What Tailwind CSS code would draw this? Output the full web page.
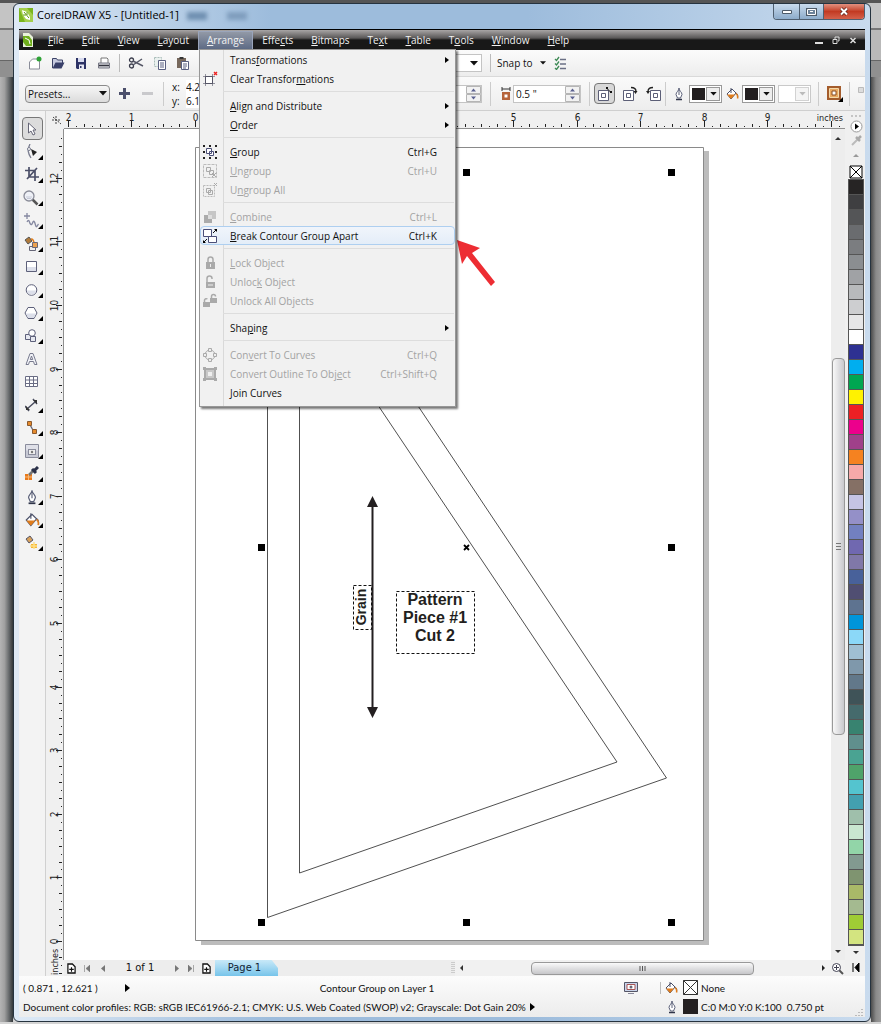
<!DOCTYPE html>
<html lang="en">
<head>
    <meta charset="utf-8">
    <title>CorelDRAW X5 - [Untitled-1]</title>
    <meta name="viewport" content="width=device-width, initial-scale=1">
    <script src="https://cdn.jsdelivr.net/npm/@tailwindcss/browser@4"></script>
</head>
<body class="min-h-screen bg-[#8c8c8c] font-['Open_Sans','Noto_Sans',sans-serif] text-[10px] leading-4 text-[#111]">

<!-- shared icons -->
<svg class="hidden">
    <symbol id="i-bucket" viewBox="0 0 14 14"><path d="M2 7l5-5 4 4-5 6z" fill="#fff" stroke="#4a5068"/><path d="M2 7.500h8l-4 4.500z" fill="#e07d1c"/><path d="M6 1v5M11 6c2 1 2 3 1.500 5" fill="none" stroke="#4a5068"/><path d="M11 6.500c1.500 1 2 2.500 1.500 5" fill="none" stroke="#e07d1c" stroke-width="1.500"/></symbol>
    <symbol id="i-pen" viewBox="0 0 14 14"><path d="M7 1c0 3-3 4-3 6.500L5.500 11h3L10 7.500C10 5 7 4 7 1z" fill="#fff" stroke="#5a6078"/><path d="M7 3v5" stroke="#5a6078"/><path d="M4 12.500h6" stroke="#30354a" stroke-width="1.500"/></symbol>
    <symbol id="i-down" viewBox="0 0 8 5"><path d="M0 0h8L4 4.500z" fill="currentColor"/></symbol>
    <symbol id="i-addpage" viewBox="0 0 10 12"><path d="M1 1h5l3 3v7H1z" fill="#fff" stroke="#111" stroke-width="1.400"/><path d="M5 4.500v5M2.500 7h5" stroke="#111" stroke-width="1.300"/></symbol>
    <symbol id="i-logo" viewBox="0 0 14 14"><path d="M0 0h14v14H0z" fill="#7ab51d"/><path d="M0 0h8l6 7v7H6z" fill="#a4cf4c"/><path d="M3 2l5 2 3 5v3l-4-1-3-4z" fill="#fff"/><path d="M5 4l5 6M8 4v3M4 7h3" stroke="#5f9a10"/></symbol>
    <symbol id="i-fly" viewBox="0 0 5 5"><path d="M5 0v5H0z" fill="#000"/></symbol>
</svg>

<div class="flex min-h-screen bg-[linear-gradient(#555_0_3px,#c4c4c4_3px_28px,#777_28px_30px,#b9b9b9_30px_60px,#666_60px_61px,#909090_61px_77px,transparent_77px_1006px,#d4d4d4_1006px)] pt-[3px] pb-[3px]">
    <div class="w-[13px] shrink-0 self-stretch mt-[74px] bg-[linear-gradient(to_right,#b4b4b4,#a0a0a0_35%,#5c6062_75%,#33383b)]"></div>

    <div class="flex min-w-0 flex-1 flex-col rounded-md border border-[#26333f] bg-[linear-gradient(to_right,#dfeaf6,#9dbcdc_30%,#9dbcdc_60%,#c9dbee)] px-[5px] pb-1">

        <!-- title bar -->
        <header class="flex h-[25px] shrink-0 items-start">
            <svg class="mt-1 mr-1 size-[14px]"><use href="#i-logo"/></svg>
            <h1 class="mt-[3px] text-[11px] text-black">CorelDRAW X5 - [Untitled-1]</h1>
            <div class="ml-2 mt-2 flex gap-5 text-[#5f7d9d] blur-[2px]">
                <span class="h-2 w-5 bg-[#6f8fb0]"></span>
                <span class="h-2 w-5 bg-[#7f9dbd]"></span>
            </div>
            <div class="ml-auto flex h-4 overflow-hidden rounded-b border border-t-0 border-[#4f5f70]">
                <button aria-label="Minimize" class="flex w-[26px] items-center justify-center border-r border-[#4f5f70] bg-linear-to-b from-[#c9dbed] to-[#8daccb]"><svg class="h-1 w-[10px]"><path d="M.5.5h9v3h-9z" fill="#fff" stroke="#4d5a68"/></svg></button>
                <button aria-label="Maximize" class="flex w-6 items-center justify-center border-r border-[#4f5f70] bg-linear-to-b from-[#c9dbed] to-[#8daccb]"><svg class="h-2 w-[11px]"><path d="M1 1h9v6H1z" fill="#6d8299" stroke="#4d5a68" stroke-width="2"/><path d="M1.500 1.500h8v5h-8zM4 3.500h3" fill="none" stroke="#fff"/></svg></button>
                <button aria-label="Close" class="flex w-10 items-center justify-center bg-linear-to-b from-[#e0907f] via-[#c23a22] to-[#d4604a]"><svg class="h-[9px] w-[10px]"><path d="M2 1.500l6 6M8 1.500l-6 6" stroke="#5a2018" stroke-width="3.500"/><path d="M2 1.500l6 6M8 1.500l-6 6" stroke="#fff" stroke-width="2"/></svg></button>
            </div>
        </header>

        <div class="relative flex flex-1 flex-col border-t border-black bg-[#f0f0f0]">

            <!-- menu bar -->
            <nav class="flex h-5 shrink-0 items-center bg-[linear-gradient(#a8a5a5,#5a5858_40%,#181818_50%,#181818)] text-[#f2f2f2]">
                <svg class="ml-1 mr-[6px] h-[14px] w-[10px] shrink-0" viewBox="0 0 10 14"><path d="M0 0h6l4 4v10H0z" fill="#e9f2da"/><path d="M0 3h6l3 4v6H3L0 9z" fill="#6fae1c"/><path d="M2 5l4 2 1 4" stroke="#fff" fill="none"/></svg>
                <button class="px-[9px]"><u>F</u>ile</button>
                <button class="px-[9px]"><u>E</u>dit</button>
                <button class="px-[9px]"><u>V</u>iew</button>
                <button class="px-[9px]"><u>L</u>ayout</button>
                <button class="h-[19px] border border-[#9aa5bb] bg-linear-to-b from-[#9299a6] to-[#5e6b85] px-2"><u>A</u>rrange</button>
                <button class="px-[9px]">Effe<u>c</u>ts</button>
                <button class="px-[9px]"><u>B</u>itmaps</button>
                <button class="px-[9px]">Te<u>x</u>t</button>
                <button class="px-[9px]"><u>T</u>able</button>
                <button class="px-[9px]">T<u>o</u>ols</button>
                <button class="px-[9px]"><u>W</u>indow</button>
                <button class="px-[9px]"><u>H</u>elp</button>
                <div class="ml-auto mr-2 flex items-center gap-[9px]">
                    <button aria-label="Minimize document"><svg class="h-2 w-2"><path d="M0 7h8" stroke="#ddd" stroke-width="2"/></svg></button>
                    <button aria-label="Restore document"><svg class="h-2 w-2"><path d="M1 3.500h4v4H1zM3 3V1h4v4H6" fill="none" stroke="#ddd"/></svg></button>
                    <button aria-label="Close document"><svg class="h-2 w-2"><path d="M1.500 2l5 5M6.500 2l-5 5" stroke="#ddd" stroke-width="1.500"/></svg></button>
                </div>
            </nav>

            <!-- standard toolbar -->
            <div class="flex h-[27px] shrink-0 items-center border-b border-[#d9d9d9] bg-linear-to-b from-[#fbfbfb] to-[#ededed]">
                <div class="flex items-center gap-[9px] pl-[9px]">
                    <button aria-label="New"><svg class="size-[14px]"><path d="M1.500 13V6l3-3h7v10z" fill="#fff" stroke="#8a8d99"/><circle cx="11" cy="3" r="2.500" fill="#2fa336"/></svg></button>
                    <button aria-label="Open"><svg class="size-[14px]"><path d="M1.500 12V2.500h4l1 1.500h5v3" fill="#c7cbe0" stroke="#3b4266"/><path d="M1.500 12.500l3-6h9l-3 6z" fill="#39406a"/></svg></button>
                    <button aria-label="Save"><svg class="size-[14px]"><path d="M2 2h10v11H3l-1-1z" fill="#2d3366"/><path d="M4 2h6v4H4z" fill="#d9dcf0"/><path d="M5 8.500h5V13H5z" fill="#e8e9f4"/><path d="M6 10h1.500v2H6z" fill="#2d3366"/></svg></button>
                    <button aria-label="Print"><svg class="size-[14px]"><path d="M4 7V2h6l1 1v4" fill="#fff" stroke="#777"/><path d="M1.500 7h11v5h-11z" fill="#d6d6dc" stroke="#777885"/><path d="M2 9.500h10" stroke="#33343f" stroke-width="1.500"/></svg></button>
                </div>
                <i class="mx-2 h-[18px] border-l border-[#bbb]"></i>
                <div class="flex items-center gap-[9px]">
                    <button aria-label="Cut"><svg class="h-[14px] w-4"><circle cx="3.500" cy="4" r="2" fill="none" stroke="#3b3d4c" stroke-width="1.300"/><circle cx="3.500" cy="10" r="2" fill="none" stroke="#3b3d4c" stroke-width="1.300"/><path d="M5 5l10 5M5 9l9-6" stroke="#555766" stroke-width="1.500"/></svg></button>
                    <button aria-label="Copy"><svg class="size-[14px]"><path d="M1.500 1.500h7v9h-7z" fill="#eaf1ef" stroke="#a9bdb9" stroke-dasharray="2 1"/><path d="M5.500 4.500h7v9h-7z" fill="#fff" stroke="#5a6080"/><path d="M7 7h4M7 9h4M7 11h4" stroke="#5a6080"/></svg></button>
                    <button aria-label="Paste"><svg class="size-[14px]"><path d="M1 2h9v10H1z" fill="#77685c"/><path d="M3.500 1h4v2h-4z" fill="#333"/><path d="M5.500 5.500h7v8h-7z" fill="#fff" stroke="#5a6080"/><path d="M7 8h4M7 10h4M7 12h3" stroke="#5a6080"/></svg></button>
                </div>
                <select aria-label="Zoom levels" class="ml-[210px] h-[18px] w-[82px] shrink-0 appearance-none border border-[#c4c4c4] bg-white"><option></option></select>
                <svg class="-ml-3 h-[5px] w-2"><use href="#i-down"/></svg>
                <i class="ml-3 mr-[6px] h-[18px] border-l border-[#bbb]"></i>
                <button class="flex items-center gap-2 whitespace-nowrap">Snap to <svg class="h-[4px] w-[6px]"><use href="#i-down"/></svg></button>
                <button aria-label="Options" class="ml-2"><svg class="size-[14px]"><path d="M1 3l1.500 1.500L5 1M1 7.500L2.500 9 5 5.500M1 12l1.500 1.500L5 10" fill="none" stroke="#3d8a55" stroke-width="1.300"/><path d="M6 3.500h6M6 8h6M6 12.500h6" stroke="#6b7085" stroke-width="1.500"/></svg></button>
            </div>

            <!-- property bar -->
            <div class="flex h-[34px] shrink-0 items-center border-b border-[#cfcfcf] bg-linear-to-b from-[#fafafa] to-[#ededed] pl-[6px]">
                <select aria-label="Presets" class="h-[18px] w-[85px] shrink-0 appearance-none rounded-sm border border-[#8b8b8b] bg-linear-to-b from-[#f6f6f6] to-[#dcdcdc] px-[2px]"><option>Presets...</option></select>
                <svg class="-ml-[11px] h-[5px] w-2 shrink-0"><use href="#i-down"/></svg>
                <button aria-label="Add preset" class="ml-3"><svg class="size-[11px]"><path d="M5.500 0v11M0 5.500h11" stroke="#4b4f6b" stroke-width="3"/></svg></button>
                <button aria-label="Delete preset" class="ml-3"><svg class="size-[11px]"><path d="M0 5.500h11" stroke="#c9c9cc" stroke-width="3"/></svg></button>
                <i class="ml-[10px] mr-2 h-6 border-l border-[#ccc]"></i>
                <div class="grid grid-cols-[14px_50px] leading-[14px]">
                    <label for="pos-x">x:</label><input id="pos-x" class="w-full bg-white" value="4.246 &quot;">
                    <label for="pos-y">y:</label><input id="pos-y" class="w-full bg-white" value="6.138 &quot;">
                </div>
                <div class="ml-[164px] flex h-[18px] w-[82px] shrink-0 items-center border border-[#c4c4c4] bg-white">
                    <input aria-label="Contour steps" class="w-full min-w-0">
                    <svg class="h-4 w-[15px] shrink-0"><path d="M.5.500h14v7H.5zM.5 8.500h14v7H.5z" fill="#f2f2f2" stroke="#b5b5b5"/><path d="M5 5.500h5L7.500 2.500zM5 10.500h5l-2.500 3z" fill="#5b6190"/></svg>
                </div>
                <i class="mx-2 h-6 border-l border-[#ccc]"></i>
                <svg class="mr-[2px] ml-[2px] h-[14px] w-[10px] shrink-0"><path d="M1 2h8M1 0v4M9 0v4" stroke="#333"/><path d="M1 5h8v8H1z" fill="#b5633a"/><path d="M3.500 7.500h3v3h-3z" fill="#fff"/></svg>
                <div class="flex h-[18px] w-[68px] shrink-0 items-center border border-[#c4c4c4] bg-white">
                    <input aria-label="Contour offset" class="w-full min-w-0 pl-[2px]" value="0.5 &quot;">
                    <svg class="h-4 w-[15px] shrink-0"><path d="M.5.500h14v7H.5zM.5 8.500h14v7H.5z" fill="#f2f2f2" stroke="#b5b5b5"/><path d="M5 5.500h5L7.500 2.500zM5 10.500h5l-2.500 3z" fill="#5b6190"/></svg>
                </div>
                <i class="ml-2 mr-1 h-6 border-l border-[#ccc]"></i>
                <div class="flex items-center gap-2">
                    <button aria-label="Linear contour colors" class="flex h-[21px] w-[21px] items-center justify-center rounded-sm border border-[#777] bg-[#d8d8d8]"><svg class="size-[14px]"><path d="M.5 3.500h10v10H.5zM3.500 6.500h4v4h-4z" fill="#fff" stroke="#5c5f77"/><path d="M9 1.500l4 4" stroke="#111"/><path d="M8 0h2v2H8zM12 4h2v2h-2z" fill="#111"/></svg></button>
                    <button aria-label="Clockwise contour colors"><svg class="size-[15px]"><path d="M.5 4.500h10v10H.5zM3.500 7.500h4v4h-4z" fill="#fff" stroke="#5c5f77"/><path d="M8 1.500c3 0 5 1 5 4" stroke="#222" fill="none" stroke-width="1.300"/><path d="M10.500 5h4L12.500 8z" fill="#222"/></svg></button>
                    <button aria-label="Counterclockwise contour colors"><svg class="size-[15px]"><path d="M4.500 4.500h10v10h-10zM7.500 7.500h4v4h-4z" fill="#fff" stroke="#5c5f77"/><path d="M7 1.500c-3 0-5 1-5 4" stroke="#222" fill="none" stroke-width="1.300"/><path d="M0 5h4L2 8z" fill="#222"/></svg></button>
                </div>
                <i class="mr-[6px] ml-1 h-6 border-l border-[#ccc]"></i>
                <div class="flex items-center gap-[3px]">
                    <svg class="size-[14px]"><use href="#i-pen"/></svg>
                    <button aria-label="Outline color" class="flex h-[18px] w-[33px] border border-[#999] bg-white p-px"><span class="m-px h-3 w-[14px] bg-[#231f20]"></span><span class="ml-auto flex w-[14px] items-center justify-center border border-[#999] bg-[#eee]"><svg class="h-[4px] w-[7px]"><use href="#i-down"/></svg></span></button>
                    <svg class="size-[14px]"><use href="#i-bucket"/></svg>
                    <button aria-label="Fill color" class="flex h-[18px] w-[33px] border border-[#999] bg-white p-px"><span class="m-px h-3 w-[14px] bg-[#231f20]"></span><span class="ml-auto flex w-[14px] items-center justify-center border border-[#999] bg-[#eee]"><svg class="h-[4px] w-[7px]"><use href="#i-down"/></svg></span></button>
                    <button aria-label="Fountain fill color" disabled class="flex h-[18px] w-[33px] border border-[#c9c9c9] bg-white p-px"><span class="ml-auto flex w-[14px] items-center justify-center border border-[#d2d2d2] bg-[#f4f4f4] text-[#bbb]"><svg class="h-[4px] w-[7px]"><use href="#i-down"/></svg></span></button>
                </div>
                <i class="mx-[7px] h-6 border-l border-[#ccc]"></i>
                <button aria-label="Object and color acceleration"><svg class="size-[17px]"><path d="M1 1h14v14H1z" fill="#a45c2c"/><path d="M3.500 3.500h9v9h-9z" fill="#e9a860" stroke="#f5d9a8"/><path d="M6 6h4v4H6z" fill="#fff" stroke="#8a4c20"/><path d="M17 12v5h-5z" fill="#000"/></svg></button>
                <i class="ml-[6px] mr-2 h-6 border-l border-[#ccc]"></i>
                <svg class="mb-2 size-[6px]"><path d="M.5.500h5v5h-5z" fill="#ddd" stroke="#bbb"/></svg>
            </div>

            <!-- workspace -->
            <div class="flex flex-1">
                <div class="flex w-[27px] shrink-0 flex-col items-center border-r border-[#d0d0d0] bg-[#f3f3f3] pt-[6px]" id="toolbox">
                    <button aria-label="Pick" class="flex h-[23px] w-[21px] items-center justify-center rounded-sm border border-[#777] bg-[#dcdcdc]"><svg class="h-[14px] w-[10px]"><path d="M1.500 1v10l2.500-2 2 4 2-1-2-4h3z" fill="#fff" stroke="#667"/></svg></button>
                    <button aria-label="Shape" class="relative h-[23px] w-[22px]"><svg class="mx-[5px] size-4"><path d="M4 0c-3 6-2 9 1 14" fill="none" stroke="#7a7d90" stroke-width="1.300"/><circle cx="3" cy="5" r="1.500" fill="#fff" stroke="#7a7d90"/><path d="M5 5l6 3-4 4z" fill="#222"/></svg></button>
                    <button aria-label="Crop" class="relative h-[23px] w-[22px]"><svg class="mx-[4px] size-4"><path d="M4 0v10h10M0 3.500h10V14M2 12L12 1" fill="none" stroke="#4b4f68" stroke-width="1.700"/></svg></button>
                    <button aria-label="Zoom" class="relative h-[23px] w-[22px]"><svg class="mx-[2px] size-4"><path d="M9.500 9.500l5 5" stroke="#555" stroke-width="2.500"/><circle cx="6" cy="6" r="5" fill="#eef0f6" stroke="#8a8c98" stroke-width="1.300"/><path d="M3 7h6M4 8.500h4" stroke="#c6cad8"/></svg></button>
                    <button aria-label="Freehand" class="relative h-[23px] w-[22px]"><svg class="mx-[3px] size-4"><path d="M0 3h6M3 0v6M3 9c1-2 2-2 2.500 0s2 4 3 1 2-2 3 2 2 0 3-1" fill="none" stroke="#8588a0" stroke-width="1.300"/></svg></button>
                    <button aria-label="Smart fill" class="relative h-[23px] w-[22px]"><svg class="mx-[3px] size-4"><path d="M1 4l4-3 3 4-4 3z" fill="#b07a3a" stroke="#555"/><path d="M7 3c2 0 3 2 3 5" fill="none" stroke="#e07d1c" stroke-width="1.500"/><path d="M5.500 10.500v4h6v-4z" fill="#eee" stroke="#667"/><path d="M8.500 6.500h5v5h-5z" fill="#eba04e" stroke="#667"/></svg></button>
                    <button aria-label="Rectangle" class="relative h-[23px] w-[22px]"><svg class="mx-[4px] size-[14px]"><path d="M1.500 1.500h10v10h-10z" fill="#fff" stroke="#5d607a"/><path d="M2 7h9v4H2z" fill="#dcdfea"/></svg></button>
                    <button aria-label="Ellipse" class="relative h-[23px] w-[22px]"><svg class="mx-[4px] size-[14px]"><circle cx="6.500" cy="7" r="5.300" fill="#fff" stroke="#5d607a"/><path d="M2 7.500h9a4.500 4 0 01-9 0z" fill="#dcdfea"/></svg></button>
                    <button aria-label="Polygon" class="relative h-[23px] w-[22px]"><svg class="mx-[3px] size-[14px]"><path d="M4 1.500h6l3 5.500-3 5.500H4L1 7z" fill="#fff" stroke="#5d607a"/><path d="M2 7.500h10l-2 4.500H4z" fill="#dcdfea"/></svg></button>
                    <button aria-label="Basic shapes" class="relative h-[23px] w-[22px]"><svg class="mx-[3px] size-[14px]"><path d="M1.500 5.500h6v5h-6z" fill="#e6e8f0" stroke="#5d607a"/><circle cx="8" cy="4" r="3.300" fill="#fff" stroke="#5d607a"/><path d="M6.500 12.500v-5h5v5z" fill="#e6e8f0" stroke="#5d607a"/></svg></button>
                    <button aria-label="Text" class="h-[23px] w-[22px]"><svg class="mx-[4px] size-[14px]"><path d="M1 12.500L5 1.500h3L12 12.500H9.500l-1-3h-4l-1 3zM6.500 4L5.300 7.500h2.400z" fill="#f2f3f8" stroke="#777a8e"/></svg></button>
                    <button aria-label="Table" class="h-[23px] w-[22px]"><svg class="mx-[4px] size-[14px]"><path d="M.5 1.500h12v10H.5zM4.500 1.500v10M8.500 1.500v10M.5 5h12M.5 8.500h12" fill="#fff" stroke="#6a6d84"/></svg></button>
                    <button aria-label="Dimension" class="relative h-[23px] w-[22px]"><svg class="mx-[4px] size-[14px]"><path d="M2 11L10 4M0 8l4 5M8 1l4 5" stroke="#4b4e60" stroke-width="1.500"/><path d="M1 12V8l4 4zM12 2v4L8 2z" fill="#333"/></svg></button>
                    <button aria-label="Connector" class="relative h-[23px] w-[22px]"><svg class="mx-[4px] size-[15px]"><path d="M4 3l5 9" stroke="#667" stroke-width="1.300"/><path d="M2.500 1.500h4v4h-4zM7.500 9.500h4v4h-4z" fill="#e58a2c" stroke="#8a5a30"/></svg></button>
                    <button aria-label="Interactive blend" class="relative h-[23px] w-[22px]"><svg class="mx-[4px] size-[14px]"><path d="M.5.500h13v13H.5z" fill="#dfe0e8" stroke="#8a8c9c"/><path d="M1 6.500h12V13H1z" fill="#c7c9d4"/><rect x="3.500" y="5.500" width="7" height="5" fill="#eee" stroke="#8a8c9c"/><circle cx="7" cy="8" r="1.200" fill="#777"/></svg></button>
                    <button aria-label="Eyedropper" class="relative h-[23px] w-[22px]"><svg class="mx-[3px] size-[15px]"><path d="M1 8h7v6H1z" fill="#e8791a"/><path d="M4.500 8v6M1 11h7" stroke="#f7b877"/><path d="M5 9l6-6" stroke="#777" stroke-width="2.500"/><path d="M8 3l4 4M10 5l4-4" stroke="#2a3048" stroke-width="3"/></svg></button>
                    <button aria-label="Outline" class="relative h-[23px] w-[22px]"><svg class="mx-[3px] size-4"><use href="#i-pen"/></svg></button>
                    <button aria-label="Fill" class="relative h-[23px] w-[22px]"><svg class="mx-[3px] size-4"><use href="#i-bucket"/></svg></button>
                    <button aria-label="Interactive fill" class="relative h-[23px] w-[22px]"><svg class="mx-[4px] size-[15px]"><path d="M1 4l4-3 3 4-4 3z" fill="#d9a15a" stroke="#556"/><path d="M6 9h6v4H6z" fill="#f7b733"/><path d="M9 7v7M5 11h7" stroke="#fde08a" stroke-width="1.500"/></svg></button>
                </div>

                <div class="flex min-w-0 flex-1 flex-col">
                    <!-- top ruler -->
                    <svg id="ruler-x" class="h-[18px] w-full overflow-hidden font-['DejaVu_Sans_Condensed',sans-serif] text-[10px]"></svg>
                    <div class="flex flex-1">
                        <svg id="ruler-y" class="w-[18px] shrink-0 overflow-hidden font-['DejaVu_Sans_Condensed',sans-serif] text-[10px]"></svg>
                        <div class="flex min-w-0 flex-1 flex-col">
                            <div class="flex flex-1">
                                <!-- drawing page -->
                                <svg class="h-[831px] min-w-0 flex-1 overflow-hidden bg-white" id="drawing">
                                    <path d="M137 22h508v794H137z" fill="#bcbcbc"/>
                                    <path d="M131.500 18.500h508v793h-508z" fill="#fff" stroke="#8a8a8a"/>
                                    <path d="M203.500 51.500v737L602.500 649zM235.500 159v585L553 633z" fill="none" stroke="#3c3c3c" stroke-width=".9"/>
                                    <path d="M308.500 375v206" stroke="#231f20" stroke-width="2"/>
                                    <path d="M308.500 367l5.500 11h-11zM308.500 589l5.500-11h-11z" fill="#231f20"/>
                                    <path d="M289.500 456.500h18v44h-18z M332.500 462.500h78v62h-78z" fill="none" stroke="#111" stroke-dasharray="3 2"/>
                                    <g class="font-['Liberation_Sans',sans-serif] text-base font-bold" fill="#231f20" text-anchor="middle">
                                        <text class="text-[14px]" transform="translate(302 478) rotate(-90)">Grain</text>
                                        <text x="371" y="476">Pattern</text>
                                        <text x="371" y="494">Piece #1</text>
                                        <text x="371" y="512">Cut 2</text>
                                    </g>
                                    <path d="M400 416l5 5M405 416l-5 5" stroke="#000" stroke-width="1.800"/>
                                    <path d="M399 40h7v7h-7zM604 40h7v7h-7zM194 415h7v7h-7zM604 415h7v7h-7zM194 790h7v7h-7zM399 790h7v7h-7zM604 790h7v7h-7z"/>
                                    <path d="M393 111l23 8-8 5 23 29-4 4-24-30-5 8z" fill="#ed2d33"/>
                                </svg>
                                <!-- vertical scroll bar -->
                                <div class="flex w-[14px] shrink-0 flex-col items-center bg-[#ededed]">
                                    <svg class="mt-1 h-3 w-2"><path d="M1 7h6L4 4z" fill="#333"/></svg>
                                    <div class="mt-[213px] flex h-[377px] w-[13px] items-center justify-center rounded-sm border border-[#999] bg-linear-to-r from-[#f8f8f8] to-[#c9c9cd]"><svg class="h-[7px] w-[5px]"><path d="M0 .5h5M0 3.500h5M0 6.500h5" stroke="#777"/></svg></div>
                                    <svg class="mt-auto mb-1 h-2 w-2"><path d="M1 2h6L4 5z" fill="#333"/></svg>
                                </div>
                            </div>
                            <!-- page navigator -->
                            <div class="flex h-4 shrink-0 items-center bg-[#ededed] font-['DejaVu_Sans_Condensed','DejaVu_Sans',sans-serif] text-[11px] text-[#777]">
                                <button aria-label="Add page before" class="ml-[3px]"><svg class="h-[11px] w-[9px]"><use href="#i-addpage"/></svg></button>
                                <button aria-label="First page" class="ml-2"><svg class="h-[7px] w-[6px]"><path d="M.5 0v7M6 0v7L2 3.500z" fill="currentColor" stroke="currentColor" stroke-width=".6"/></svg></button>
                                <button aria-label="Previous page" class="ml-[10px]"><svg class="h-[7px] w-[5px]"><path d="M5 0v7L1 3.500z" fill="currentColor"/></svg></button>
                                <span class="w-[70px] text-center text-[#111]">1 of 1</span>
                                <button aria-label="Next page"><svg class="h-[7px] w-[5px]"><path d="M0 0v7l4-3.500z" fill="currentColor"/></svg></button>
                                <button aria-label="Last page" class="ml-2"><svg class="h-[7px] w-[6px]"><path d="M5.500 0v7M0 0v7l4-3.500z" fill="currentColor" stroke="currentColor" stroke-width=".6"/></svg></button>
                                <button aria-label="Add page after" class="ml-2"><svg class="h-[11px] w-[9px]"><use href="#i-addpage"/></svg></button>
                                <button class="ml-1 h-4 w-[63px] bg-linear-to-b from-[#c8e9f8] to-[#76c4ea] pr-1 text-[#123] [clip-path:polygon(0_0,90%_0,100%_50%,100%_100%,0_100%)]">Page 1</button>
                                <svg class="ml-auto h-3 w-1"><path d="M1 0v12M3 0v12" stroke="#aaa" stroke-dasharray="1 1"/></svg>
                                <div class="flex h-4 w-[50%] items-center bg-[#f1f1f1]">
                                    <svg class="mx-1 h-[7px] w-[5px]"><path d="M4 0v6L1 3z" fill="#333"/></svg>
                                    <div class="ml-auto flex h-[13px] w-[57%] items-center justify-center rounded-sm border border-[#999] bg-linear-to-b from-[#fafafa] to-[#c6c6c9]"><svg class="h-[5px] w-[8px]"><path d="M1 0v5M3.500 0v5M6 0v5" stroke="#555"/></svg></div>
                                    <svg class="ml-[67px] mr-1 h-[7px] w-[5px]"><path d="M1 0v6l3-3z" fill="#222"/></svg>
                                    <button aria-label="Navigator" class="w-[15px] shrink-0"><svg class="mx-px size-[13px]"><path d="M8 8l4 4" stroke="#555" stroke-width="2"/><circle cx="5.500" cy="5.500" r="4" fill="#fff" stroke="#445"/><path d="M5.500 3v5M3 5.500h5" stroke="#445"/></svg></button>
                                </div>
                            </div>
                        </div>
                    </div>
                </div>

                <!-- colour palette -->
                <div class="flex w-5 shrink-0 flex-col items-center bg-[#f0f0f0] pl-[2px]">
                    <svg class="mt-1 h-[3px] w-[10px]"><path d="M0 1h10" stroke="#999" stroke-dasharray="2 2"/></svg>
                    <button aria-label="Palette menu" class="mt-[2px]"><svg class="size-[13px]"><circle cx="6.500" cy="6.500" r="5.500" fill="#fff" stroke="#999"/><path d="M5 3.500v6l4-3z" fill="#000"/></svg></button>
                    <button aria-label="Pick color" class="mt-px"><svg class="size-[13px]"><path d="M2 11l6-6" stroke="#bbb" stroke-width="2"/><path d="M6 3l4 4M8 5l3-3" stroke="#aaa" stroke-width="2.500"/></svg></button>
                    <svg class="mt-[6px] mb-2 h-[4px] w-[6px]"><path d="M0 4h6L3 1z" fill="#999"/></svg>
                    <button aria-label="No color"><svg class="size-[14px]"><path d="M1 1h12v12H1zM1 1l12 12M13 1L1 13" fill="#fff" stroke="#000"/></svg></button>
                    <div id="palette" class="w-4 border border-[#555]"></div>
                    <svg class="mt-1 h-[5px] w-[8px]"><path d="M1 1h6L4 4z" fill="#333"/></svg>
                    <button aria-label="Expand palette" class="mt-2"><svg class="h-[9px] w-[8px]"><path d="M1 0v9M7 0v9L3 4.500z" fill="#000" stroke="#000"/></svg></button>
                </div>
            </div>

            <!-- status bar -->
            <footer class="flex h-[41px] shrink-0 bg-linear-to-b from-[#fcfcfc] to-[#ececec] pl-1 font-['Lato',sans-serif]">
                <div class="min-w-0 flex-1 pt-[2px]">
                    <div class="flex h-[19px] items-center">
                        <span class="w-[102px]">( 0.871 , 12.621 )</span>
                        <svg class="h-2 w-[5px]"><path d="M0 0v8l5-4z"/></svg>
                        <span class="flex-1 text-center">Contour Group on Layer 1</span>
                        <svg class="mr-[22px] size-[14px]"><path d="M.5 1.500h13v9H.5z" fill="#c9d4ea" stroke="#556"/><path d="M3 3.500h8v5H3z" fill="#fff" stroke="#a55"/><circle cx="7" cy="6" r="1.500" fill="#667"/><path d="M4 12.500h6" stroke="#889"/></svg>
                    </div>
                    <div class="flex h-[19px] items-center gap-1 whitespace-nowrap">Document color profiles: RGB: sRGB IEC61966-2.1; CMYK: U.S. Web Coated (SWOP) v2; Grayscale: Dot Gain 20% <svg class="h-2 w-[5px]"><path d="M0 0v8l5-4z"/></svg></div>
                </div>
                <div class="w-[205px] shrink-0 pt-[2px]">
                    <div class="flex h-[19px] items-center gap-[3px]">
                        <i class="h-3 border-l border-[#bbb]"></i>
                        <svg class="size-[14px]"><use href="#i-bucket"/></svg>
                        <svg class="ml-[2px] size-[15px]"><path d="M.5.500h14v14H.5zM.5.500l14 14M14.500.5l-14 14" fill="#fff" stroke="#333"/></svg>
                        <span>None</span>
                    </div>
                    <div class="flex h-[19px] items-center gap-[3px] pl-[5px]">
                        <svg class="size-[14px]"><use href="#i-pen"/></svg>
                        <span class="ml-px size-[15px] bg-[#231f20]"></span>
                        <span class="whitespace-pre">C:0 M:0 Y:0 K:100  0.750 pt</span>
                        <svg class="ml-auto mr-[2px] size-2 self-end"><path d="M7 1v7M4 4v4M1 7v1" stroke="#aaa" stroke-dasharray="1 2" stroke-width="1.500"/></svg>
                    </div>
                </div>
            </footer>

            <!-- Arrange menu -->
            <div role="menu" class="absolute top-[19px] left-[180px] w-[257px] border border-[#979797] bg-[linear-gradient(to_right,#f1f1f1_23px,#d9d9d9_23px_24px,#f1f1f1_24px)] pb-1 shadow-[2px_2px_2px_#0008]">
                <button role="menuitem" class="flex h-[19px] w-full items-center pr-[5px] pl-[30px]"><span>Trans<u>f</u>ormations</span><svg class="ml-auto h-2 w-[5px]"><path d="M0 1v6l4-3z"/></svg></button>
                <button role="menuitem" class="flex h-[19px] w-full items-center pl-[2px]"><svg class="mr-3 size-4"><path d="M3.500 5.500h7v7h-7z" fill="#fff" stroke="#556"/><path d="M1 5.500h12M1 12.500h12M3.500 3v12M10.500 3v12" stroke="#556" stroke-width=".6"/><path d="M12 1l3 3M15 1l-3 3" stroke="#e22" stroke-width="1.400"/></svg><span>Clear Transfor<u>m</u>ations</span></button>
                <hr class="mt-[3px] mr-px mb-1 ml-[23px] border-t border-[#ddd]">
                <button role="menuitem" class="flex h-[19px] w-full items-center pr-[5px] pl-[30px]"><span><u>A</u>lign and Distribute</span><svg class="ml-auto h-2 w-[5px]"><path d="M0 1v6l4-3z"/></svg></button>
                <button role="menuitem" class="flex h-[19px] w-full items-center pr-[5px] pl-[30px]"><span><u>O</u>rder</span><svg class="ml-auto h-2 w-[5px]"><path d="M0 1v6l4-3z"/></svg></button>
                <hr class="mt-[3px] mr-px mb-1 ml-[23px] border-t border-[#ddd]">
                <button role="menuitem" class="flex h-[19px] w-full items-center pr-[18px] pl-[2px]"><svg class="mr-3 size-4"><path d="M1 1h2v2H1zM7 1h2v2H7zM13 1h2v2h-2zM1 7h2v2H1zM13 7h2v2h-2zM1 13h2v2H1zM7 13h2v2H7zM13 13h2v2h-2z" fill="#222"/><path d="M4.500 4.500h5v5h-5zM7.500 7.500h4v4h-4z" fill="#fff" stroke="#4b4f78"/></svg><span><u>G</u>roup</span><span class="ml-auto">Ctrl+G</span></button>
                <button role="menuitem" disabled class="flex h-[19px] w-full items-center pr-[18px] pl-[2px] text-[#a3a3a3]"><svg class="mr-3 size-4"><path d="M1.500 1.500h13v13h-13z" fill="none" stroke="#bbb" stroke-dasharray="3 1"/><path d="M4.500 4.500h4v4h-4zM7.500 7.500h4v4h-4zM10 10l4 4M14 10l-4 4" fill="none" stroke="#aaa"/></svg><span><u>U</u>ngroup</span><span class="ml-auto">Ctrl+U</span></button>
                <button role="menuitem" disabled class="flex h-[19px] w-full items-center pr-[18px] pl-[2px] text-[#a3a3a3]"><svg class="mr-3 size-4"><path d="M1.500 3.500h11v11h-11z" fill="none" stroke="#bbb" stroke-dasharray="2 1"/><path d="M4.500 6.500h4v4h-4zM6.500 8.500h4v4h-4zM12 1l3 3M15 1l-3 3" fill="none" stroke="#aaa"/></svg><span>U<u>n</u>group All</span></button>
                <hr class="mt-[3px] mr-px mb-1 ml-[23px] border-t border-[#ddd]">
                <button role="menuitem" disabled class="flex h-[19px] w-full items-center pr-[18px] pl-[2px] text-[#a3a3a3]"><svg class="mr-3 size-4"><path d="M6 2h8v8H6z" fill="#c6c6c6"/><path d="M2 6h8v8H2z" fill="#ababab"/><path d="M6 6h4v4H6z" fill="#ddd"/></svg><span><u>C</u>ombine</span><span class="ml-auto">Ctrl+L</span></button>
                <button role="menuitem" class="flex h-[19px] w-full items-center rounded-sm pr-[18px] pl-[2px] bg-linear-to-b from-[#f1f5fb] to-[#e3edf8] outline outline-offset-[-1px] outline-[#aecff0]"><svg class="mr-3 size-4"><path d="M1.500 1.500h8v7h-8z" fill="#fff" stroke="#4b4f78"/><path d="M6.500 8.500h8v6h-8z" fill="#fff" stroke="#4b4f78"/><path d="M11 5l3-3M5 11l-3 3" stroke="#111"/><path d="M12 1h3v3zM1 12v3h3z"/></svg><span><u>B</u>reak Contour Group Apart</span><span class="ml-auto">Ctrl+K</span></button>
                <hr class="mt-[3px] mr-px mb-1 ml-[23px] border-t border-[#ddd]">
                <button role="menuitem" disabled class="flex h-[19px] w-full items-center pl-[2px] text-[#a3a3a3]"><svg class="mr-3 size-4"><path d="M4 7h9v7H4z" fill="#aaa"/><path d="M6 7V4.500a2.500 2.500 0 015 0V7" fill="none" stroke="#aaa" stroke-width="1.500"/><path d="M8 9h1v3H8z" fill="#eee"/></svg><span><u>L</u>ock Object</span></button>
                <button role="menuitem" disabled class="flex h-[19px] w-full items-center pl-[2px] text-[#a3a3a3]"><svg class="mr-3 size-4"><path d="M4 8h9v6H4z" fill="#aaa"/><path d="M5 8V4.500a2.500 2.500 0 015 0V5" fill="none" stroke="#aaa" stroke-width="1.500"/><path d="M6 11h5" stroke="#eee"/></svg><span>Unloc<u>k</u> Object</span></button>
                <button role="menuitem" disabled class="flex h-[19px] w-full items-center pl-[2px] text-[#a3a3a3]"><svg class="mr-3 size-4"><path d="M1 9h7v5H1zM8 5h7v5H8z" fill="#aaa"/><path d="M2.500 9V7a2 2 0 013-1M9.500 5V3.500a2 2 0 014 0" fill="none" stroke="#aaa" stroke-width="1.500"/></svg><span>Unlock All Ob<u>j</u>ects</span></button>
                <hr class="mt-[3px] mr-px mb-1 ml-[23px] border-t border-[#ddd]">
                <button role="menuitem" class="flex h-[19px] w-full items-center pr-[5px] pl-[30px]"><span>Sha<u>p</u>ing</span><svg class="ml-auto h-2 w-[5px]"><path d="M0 1v6l4-3z"/></svg></button>
                <hr class="mt-[3px] mr-px mb-1 ml-[23px] border-t border-[#ddd]">
                <button role="menuitem" disabled class="flex h-[19px] w-full items-center pr-[18px] pl-[2px] text-[#a3a3a3]"><svg class="mr-3 size-4"><circle cx="8" cy="8" r="5" fill="none" stroke="#aaa"/><path d="M6.500 1.500h3v3h-3zM6.500 11.500h3v3h-3zM1.500 6.500h3v3h-3zM11.500 6.500h3v3h-3z" fill="#eee" stroke="#aaa"/></svg><span>Con<u>v</u>ert To Curves</span><span class="ml-auto">Ctrl+Q</span></button>
                <button role="menuitem" disabled class="flex h-[19px] w-full items-center pr-[18px] pl-[2px] text-[#a3a3a3]"><svg class="mr-3 size-4"><path d="M3 3h10v10H3z" fill="#c8c8c8" stroke="#aaa" stroke-width="2"/><path d="M6 6h4v4H6z" fill="#eee"/><path d="M1 1h3v3H1zM12 1h3v3h-3zM1 12h3v3H1zM12 12h3v3h-3z" fill="#aaa"/></svg><span>Convert Outline To Obj<u>e</u>ct</span><span class="ml-auto">Ctrl+Shift+Q</span></button>
                <button role="menuitem" class="flex h-[19px] w-full items-center pl-[30px]"><span><u>J</u>oin Curves</span></button>
            </div>
        </div>
    </div>

    <div class="mt-[74px] w-[10px] shrink-0 bg-[linear-gradient(to_right,#4c4c4c,#8a8a8a_50%,#9a9a9a)]"></div>
</div>

<script>
    const colors = ['#262424', '#3f3f41', '#545557', '#6a6c6f', '#7b7d80', '#8b8e91', '#a0a2a5', '#b8babc', '#cdced0', '#e6e6e7', '#ffffff',
        '#2e3192', '#00aeef', '#00a651', '#fff200', '#ed2024', '#ec008c', '#a0408a', '#f58220', '#f6a9a9', '#857065', '#c5c4e4', '#9490c8',
        '#7280c0', '#7068b0', '#8078a8', '#48619a', '#504e72', '#5e7390', '#0095da', '#8bd8f8', '#a0bfd2', '#7f98ab', '#62788a', '#3f5358',
        '#456a6c', '#388370', '#608f8d', '#4aa392', '#4fa36a', '#54c4cf', '#43a0b0', '#9fbfab', '#c9e6d0', '#92d5a8', '#829a90', '#7f9470',
        '#a9b968', '#a4ba90', '#9fcc35', '#d3e480'];
    const palette = document.getElementById('palette');
    for (const color of colors) {
        palette.insertAdjacentHTML('beforeend',
            `<button aria-label="${color}" class="block h-[15px] w-full border-b border-[#555]" style="background-color:${color}"></button>`);
    }

    // small corner triangle on tools that open a flyout
    for (const tool of document.querySelectorAll('#toolbox .relative')) {
        tool.insertAdjacentHTML('beforeend', '<svg class="absolute right-0 bottom-[3px] size-[5px]"><use href="#i-fly"/></svg>');
    }

    // rulers: one inch in px, eight divisions per inch
    const INCH = 63.6;
    const tick = (i) => i % 8 === 0 ? 6 : i % 2 === 0 ? 3 : 1;

    let across = '<path d="M18 17.5H800" stroke="#8f8f8f"/><path d="M6 9h9M10 5v9M7 6l8 7" stroke="#444" fill="none" stroke-dasharray="2 1"/>';
    for (let i = -16; i <= 81; i++) {
        const x = Math.round(149 + i * INCH / 8) + 0.5;
        across += `<path d="M${x} ${16 - tick(i)}V16" stroke="#222"/>`;
        if (i % 8 === 0 && i < 80) across += `<text x="${x}" y="10" text-anchor="middle" fill="#222">${Math.abs(i / 8)}</text>`;
    }
    across += '<text x="797" y="10" text-anchor="end" fill="#222" class="text-[9px]">inches</text>';
    document.getElementById('ruler-x').innerHTML = across;

    let down = '<path d="M17.5 0V831" stroke="#8f8f8f"/>';
    for (let i = -4; i <= 101; i++) {
        const y = Math.round(812 - i * INCH / 8) + 0.5;
        down += `<path d="M${16 - tick(i)} ${y}H16" stroke="#222"/>`;
        if (i % 8 === 0) down += `<text transform="translate(12 ${y}) rotate(-90)" text-anchor="middle" fill="#222">${i / 8}</text>`;
    }
    down += '<text transform="translate(12 846) rotate(-90)" fill="#222" class="text-[9px]">inches</text>';
    document.getElementById('ruler-y').innerHTML = down;
</script>
</body>
</html>
